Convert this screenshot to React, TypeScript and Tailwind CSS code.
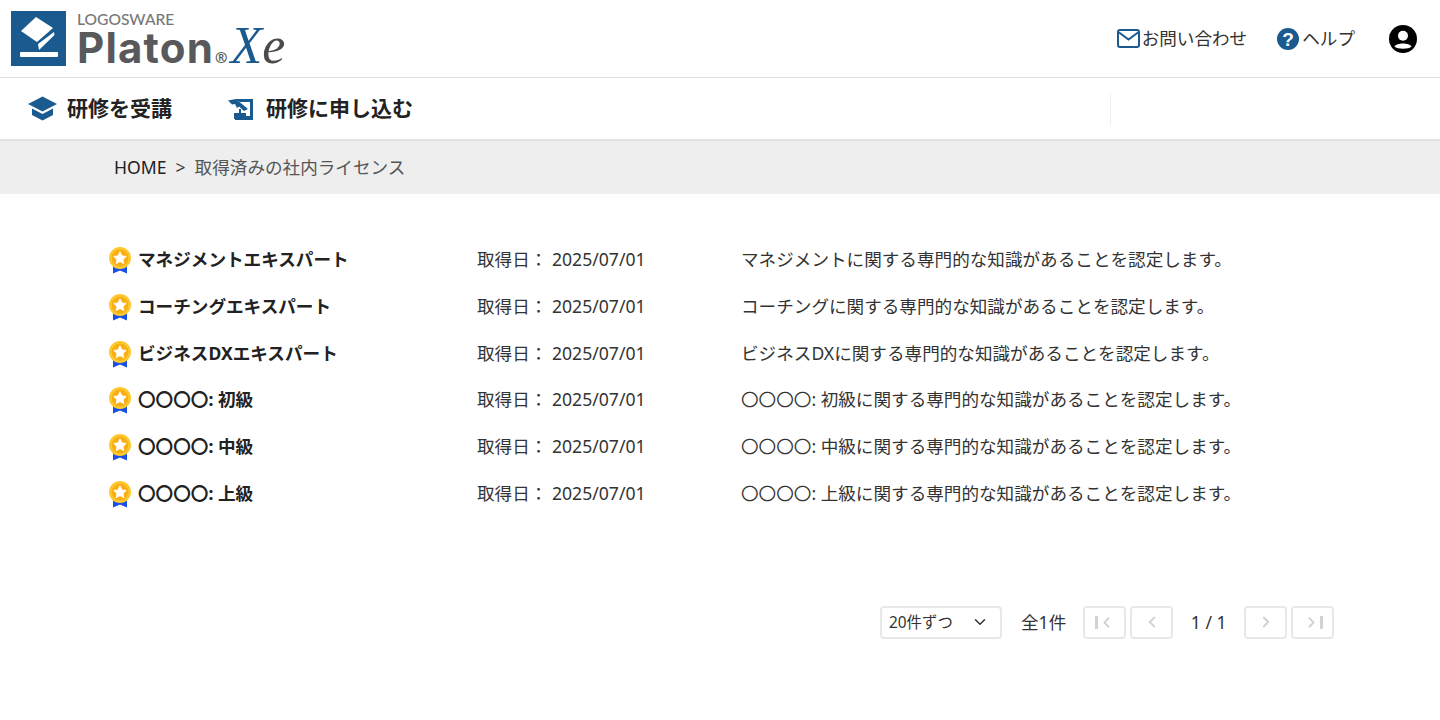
import { ChevronDown, ChevronLeft, ChevronRight } from 'lucide-react'

const licenses = [
  { name: 'マネジメントエキスパート', desc: 'マネジメントに関する専門的な知識があることを認定します。' },
  { name: 'コーチングエキスパート', desc: 'コーチングに関する専門的な知識があることを認定します。' },
  { name: 'ビジネスDXエキスパート', desc: 'ビジネスDXに関する専門的な知識があることを認定します。' },
  { name: '〇〇〇〇: 初級', desc: '〇〇〇〇: 初級に関する専門的な知識があることを認定します。' },
  { name: '〇〇〇〇: 中級', desc: '〇〇〇〇: 中級に関する専門的な知識があることを認定します。' },
  { name: '〇〇〇〇: 上級', desc: '〇〇〇〇: 上級に関する専門的な知識があることを認定します。' },
]

function LogoMark() {
  return (
    <svg width="55" height="55" viewBox="0 0 55 55" className="shrink-0">
      <rect width="55" height="55" fill="#1a5a8f" />
      <path d="M10 20 L25 6 L42 17 L26 31 Z" fill="#fff" />
      <path d="M43 21 L43.5 24 L28 39 L27 33 Z" fill="#fff" />
      <rect x="9" y="41" width="38" height="5" rx="1" fill="#fff" />
    </svg>
  )
}

function Medal() {
  return (
    <svg width="24" height="28" viewBox="0 0 24 28" className="mt-[2px] shrink-0">
      <path d="M5 20 L5 27.5 L12 24.5 L19 27.5 L19 20 Z" fill="#1a4fe6" />
      <circle cx="12" cy="12" r="11" fill="#fdc92f" />
      <circle cx="12" cy="12" r="8.4" fill="#f9ae12" />
      <path d="M12 5.6 L14 9.8 L18.4 10.4 L15.2 13.4 L16 17.8 L12 15.7 L8 17.8 L8.8 13.4 L5.6 10.4 L10 9.8 Z" fill="#fff" strokeLinejoin="round" stroke="#fff" strokeWidth="0.6" />
    </svg>
  )
}

function PageButton({ children }: { children: React.ReactNode }) {
  return (
    <button className="flex h-[33px] w-[43px] items-center justify-center rounded border-2 border-[#e6e8ea] bg-white text-[#d2d2d2]">
      {children}
    </button>
  )
}

export default function App() {
  return (
    <div className="h-[720px] bg-white font-['Noto_Sans','Noto_Sans_CJK_JP',sans-serif] text-[#222]">
      <header className="flex h-[78px] items-center justify-between border-b border-[#dcdcdc] pr-[23px] pl-[11px]">
        <div className="flex items-center gap-[11px] pb-[1px]">
          <LogoMark />
          <div className="flex h-[55px] flex-col">
            <span className="pt-[1px] font-['Lato',sans-serif] text-[15.6px] leading-[14px] font-medium text-[#777]">LOGOSWARE</span>
            <div className="flex h-[40px] items-baseline">
              <span className="font-['Inter',sans-serif] text-[42px] leading-[40px] font-bold tracking-[1.2px] text-[#58595b]">Platon</span>
              <span className="ml-[1px] text-[15px] leading-[12px] font-bold text-[#58595b]">®</span>
              <span className="ml-[3px] font-['Liberation_Serif',serif] text-[52px] leading-[40px] text-[#4b4b4b] italic">
                <span className="text-[#1a5a8f]">X</span>e
              </span>
            </div>
          </div>
        </div>
        <div className="flex items-center text-[17.6px] text-[#333]">
          <svg width="23" height="19" viewBox="0 0 23 19" className="mr-[2px]">
            <rect x="1" y="1" width="21" height="17" rx="2" fill="none" stroke="#1a5a8f" strokeWidth="2" />
            <path d="M2 3.5 L11.5 10.5 L21 3.5" fill="none" stroke="#1a5a8f" strokeWidth="2" />
          </svg>
          <span>お問い合わせ</span>
          <svg width="22" height="22" viewBox="0 0 22 22" className="mr-[3px] ml-[30px]">
            <circle cx="11" cy="11" r="11" fill="#1a5a8f" />
            <text x="11" y="17.5" textAnchor="middle" fontSize="19" fontWeight="700" fill="#fff" fontFamily="Liberation Sans, sans-serif">?</text>
          </svg>
          <span>ヘルプ</span>
          <svg width="28" height="28" viewBox="0 0 28 28" className="ml-[34px]">
            <circle cx="14" cy="14" r="14" fill="#000" />
            <circle cx="14" cy="10.8" r="5" fill="#fff" />
            <path d="M5.5 21.5 C7.5 17.5 20.5 17.5 22.5 21.5 C20 24.5 8 24.5 5.5 21.5 Z" fill="#fff" />
          </svg>
        </div>
      </header>

      <nav className="flex h-[63px] items-center border-b-2 border-[#e2e2e2] pl-[28px]">
        <div className="flex items-center gap-[10px]">
          <svg width="29" height="25" viewBox="0 0 29 25">
            <path d="M14.5 0.5 L29 8 L14.5 15.5 L0 8 Z" fill="#1a5a8f" />
            <path d="M4 12.5 L14.5 18 L25 12.5 L25 19 L14.5 24.5 L4 19 Z" fill="#1a5a8f" />
          </svg>
          <span className="text-[21px] font-bold text-[#222]">研修を受講</span>
        </div>
        <div className="ml-[56px] flex items-center gap-[13px]">
          <svg width="25" height="22" viewBox="0 0 25 22">
            <path d="M7 1 H25 V22 H7 V18 H22 V4 H12 Z" fill="#1a5a8f" />
            <path d="M0 2.5 L8 1 L20 11 L16 13 L11 8.5 L9 10 L7 6 L4 6.5 Z" fill="#1a5a8f" />
            <path d="M6 15 H18 V21 H6 Z" fill="#1a5a8f" />
            <path d="M11 11 H13 V15 H11 Z" fill="#1a5a8f" />
          </svg>
          <span className="text-[21px] font-bold text-[#222]">研修に申し込む</span>
        </div>
        <div className="ml-[697px] h-[32px] w-px bg-[#efefef]" />
      </nav>

      <div className="flex h-[53px] items-center bg-[#eee] pb-[1px] pl-[114px] text-[17.6px]">
        <span className="text-[#222]">HOME</span>
        <span className="mx-[9px] text-[#333]">&gt;</span>
        <span className="text-[#555]">取得済みの社内ライセンス</span>
      </div>

      <main className="pt-[42px] pl-[108px]">
        {licenses.map((l) => (
          <div key={l.name} className="flex h-[46.7px] items-center">
            <div className="flex w-[369px] items-center gap-[6px]">
              <Medal />
              <span className="text-[17.6px] font-bold">{l.name}</span>
            </div>
            <div className="w-[264px] text-[17.6px] text-[#333]">
              取得日： <span>2025/07/01</span>
            </div>
            <div className="text-[17.6px] text-[#333]">{l.desc}</div>
          </div>
        ))}

        <div className="mt-[89.6px] flex items-center pl-[772px] text-[#333]">
          <div className="flex h-[33px] w-[122px] items-center justify-between rounded border-2 border-[#e6e8ea] pr-[11px] pl-[7px] text-[15.4px]">
            <span>20件ずつ</span>
            <ChevronDown size={18} strokeWidth={2} />
          </div>
          <span className="ml-[19px] text-[17.6px]">全1件</span>
          <div className="ml-[17px] flex gap-[4px]">
            <PageButton>
              <span className="h-[13px] w-[3px] bg-[#d2d2d2]" />
              <ChevronLeft size={17} strokeWidth={2.5} />
            </PageButton>
            <PageButton>
              <ChevronLeft size={18} strokeWidth={2.5} />
            </PageButton>
          </div>
          <span className="w-[71px] text-center text-[17.6px]">1 / 1</span>
          <div className="flex gap-[4px]">
            <PageButton>
              <ChevronRight size={18} strokeWidth={2.5} />
            </PageButton>
            <PageButton>
              <ChevronRight size={17} strokeWidth={2.5} />
              <span className="h-[13px] w-[3px] bg-[#d2d2d2]" />
            </PageButton>
          </div>
        </div>
      </main>
    </div>
  )
}
